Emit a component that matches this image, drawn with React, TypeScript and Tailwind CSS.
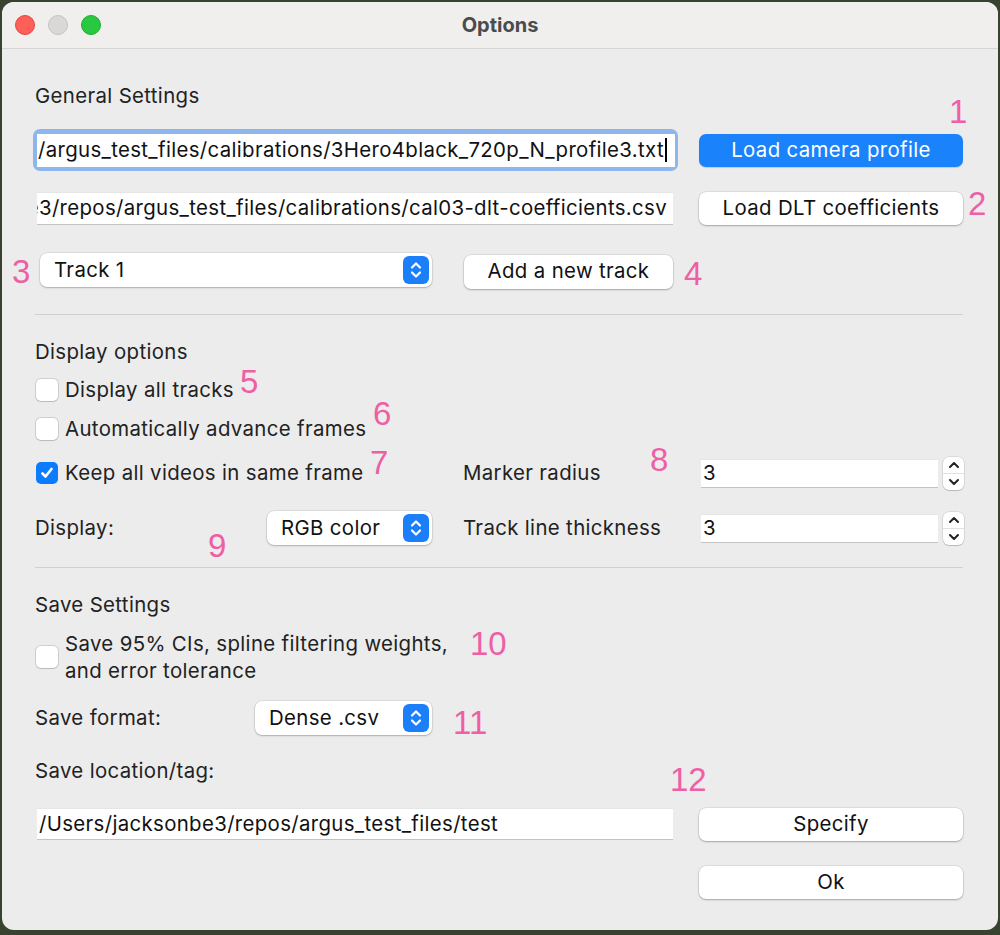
import React from "react";

const font = { fontFamily: "Inter, 'Noto Sans', sans-serif" };

function Pink({ children, x, y }: { children: React.ReactNode; x: number; y: number }) {
  return (
    <div
      className="absolute text-[33px] leading-none text-[#ee5fa5] font-['Liberation_Sans',sans-serif]"
      style={{ left: x, top: y }}
    >
      {children}
    </div>
  );
}

function Btn({ children, w = 264, primary = false, h = 33 }: { children: React.ReactNode; w?: number; primary?: boolean; h?: number }) {
  return (
    <div
      className={
        primary
          ? "flex items-center justify-center rounded-[7px] bg-[#1a82fb] text-white shadow-[0_1px_1px_rgba(0,0,0,0.15)]"
          : "flex items-center justify-center rounded-[7px] bg-white text-[#111] shadow-[0_0_0_0.5px_rgba(0,0,0,0.12),0_1px_2px_rgba(0,0,0,0.25)]"
      }
      style={{ width: w, height: h }}
    >
      {children}
    </div>
  );
}

function Field({ text, w, h = 33, alignEnd = false }: { text: string; w: number; h?: number; alignEnd?: boolean }) {
  return (
    <div
      className={
        "flex items-center overflow-hidden bg-white border-t border-t-[#e6e6e6] border-b border-b-[#c3c3c3] text-[#111] whitespace-nowrap " +
        (alignEnd ? "justify-end pr-[6px]" : "pl-[2px]")
      }
      style={{ width: w, height: h }}
    >
      <span>{text}</span>
    </div>
  );
}

function Stepper() {
  return (
    <div className="flex h-[28px] w-[26px] items-center justify-center rounded-[6px] bg-[#1a7ff8]">
      <svg width="14" height="20" viewBox="0 0 14 20" fill="none" stroke="white" strokeWidth="2.2" strokeLinecap="round" strokeLinejoin="round">
        <path d="M3 7.5 L7 3.5 L11 7.5" />
        <path d="M3 12.5 L7 16.5 L11 12.5" />
      </svg>
    </div>
  );
}

function Combo({ text, w, textPad = 14 }: { text: string; w: number; textPad?: number }) {
  return (
    <div
      className="flex h-[34px] items-center justify-between rounded-[7px] bg-white pr-[3px] text-[#111] shadow-[0_0_0_0.5px_rgba(0,0,0,0.12),0_1px_2px_rgba(0,0,0,0.22)]"
      style={{ width: w, paddingLeft: textPad }}
    >
      <span>{text}</span>
      <Stepper />
    </div>
  );
}

function Check({ checked = false }: { checked?: boolean }) {
  return checked ? (
    <div className="flex h-[22px] w-[22px] shrink-0 items-center justify-center rounded-[5px] bg-[#0b7cfd]">
      <svg width="16" height="16" viewBox="0 0 16 16" fill="none" stroke="white" strokeWidth="2.6" strokeLinecap="round" strokeLinejoin="round">
        <path d="M3.5 8.5 L6.5 11.5 L12.5 4" />
      </svg>
    </div>
  ) : (
    <div className="h-[22px] w-[22px] shrink-0 rounded-[5px] bg-white shadow-[0_0_0_1px_rgba(0,0,0,0.12),0_1px_1px_rgba(0,0,0,0.1)]" />
  );
}

function Spin() {
  return (
    <div className="flex items-center">
      <div className="flex h-[29px] w-[237px] items-center bg-white border-t border-t-[#e6e6e6] border-b border-b-[#c3c3c3] pl-[2px] text-[#111]">
        3
      </div>
      <div className="ml-[5px] flex h-[33px] w-[21px] flex-col rounded-[6px] bg-white shadow-[0_0_0_0.5px_rgba(0,0,0,0.15),0_1px_1px_rgba(0,0,0,0.15)]">
        <div className="flex flex-1 items-center justify-center border-b border-[#e2e2e2]">
          <svg width="12" height="8" viewBox="0 0 12 8" fill="none" stroke="#222" strokeWidth="2" strokeLinecap="round" strokeLinejoin="round">
            <path d="M2 6 L6 2 L10 6" />
          </svg>
        </div>
        <div className="flex flex-1 items-center justify-center">
          <svg width="12" height="8" viewBox="0 0 12 8" fill="none" stroke="#222" strokeWidth="2" strokeLinecap="round" strokeLinejoin="round">
            <path d="M2 2 L6 6 L10 2" />
          </svg>
        </div>
      </div>
    </div>
  );
}

export default function App() {
  return (
    <div className="relative h-[935px] w-[1000px] overflow-hidden bg-[#37422f]" style={font}>
      <div className="relative ml-[2px] mt-[2px] h-[928px] w-[996px] overflow-hidden rounded-[12px] bg-[#ececec] text-[#222]">
        {/* title bar */}
        <div className="relative flex h-[47px] items-center border-b border-[#d6d6d6] bg-[#f0efee]">
          <div className="ml-[13px] flex gap-[13px]">
            <div className="h-[20px] w-[20px] rounded-full bg-[#fe5f57] border border-[#e2463f]" />
            <div className="h-[20px] w-[20px] rounded-full bg-[#d9d8d7] border border-[#c4c3c2]" />
            <div className="h-[20px] w-[20px] rounded-full bg-[#28c840] border border-[#1ead31]" />
          </div>
          <div className="absolute inset-0 flex items-center justify-center text-[20px] font-bold text-[#4b4b4b]">
            Options
          </div>
        </div>

        {/* body */}
        <div className="flex flex-col text-[20.4px] tracking-[0.35px]">
          <div className="ml-[33px] mt-[35px] h-[24px] leading-[24px]">General Settings</div>

          {/* row 1 */}
          <div className="mt-[21px] flex h-[42px] items-center">
            <div className="ml-[31px] flex h-[42px] w-[645px] items-center justify-center rounded-[7px] bg-[#8db6ec]">
              <div className="flex h-[33px] w-[638px] items-center justify-end overflow-hidden bg-white pr-[8px] text-[#111] whitespace-nowrap">
                <span>/Users/jacksonbe3/repos/argus_test_files/calibrations/3Hero4black_720p_N_profile3.txt</span>
                <span className="ml-[1px] h-[24px] w-[1.5px] shrink-0 bg-black" />
              </div>
            </div>
            <div className="ml-[21px]">
              <Btn primary>Load camera profile</Btn>
            </div>
          </div>

          {/* row 2 */}
          <div className="mt-[20px] flex h-[35px] items-center">
            <div className="ml-[35px]">
              <Field text="/Users/jacksonbe3/repos/argus_test_files/calibrations/cal03-dlt-coefficients.csv" w={636} alignEnd />
            </div>
            <div className="ml-[26px]">
              <Btn>Load DLT coefficients</Btn>
            </div>
          </div>

          {/* row 3 */}
          <div className="mt-[26px] flex h-[36px] items-center">
            <div className="ml-[38px]">
              <Combo text="Track 1" w={392} />
            </div>
            <div className="ml-[32px] mt-[3px]">
              <Btn w={209} h={34}>Add a new track</Btn>
            </div>
          </div>

          <div className="ml-[33px] mt-[26px] h-px w-[928px] bg-[#d0d0d0]" />

          <div className="ml-[33px] mt-[25px] h-[24px] leading-[24px]">Display options</div>

          <div className="mt-[14px] flex h-[24px] items-center">
            <div className="ml-[34px]"><Check /></div>
            <span className="ml-[7px]">Display all tracks</span>
          </div>
          <div className="mt-[15px] flex h-[24px] items-center">
            <div className="ml-[34px]"><Check /></div>
            <span className="ml-[7px]">Automatically advance frames</span>
          </div>

          <div className="mt-[15px] flex h-[34px] items-center">
            <div className="ml-[34px]"><Check checked /></div>
            <span className="ml-[7px] w-[390px] whitespace-nowrap">Keep all videos in same frame</span>
            <span className="ml-[8px] w-[238px]">Marker radius</span>
            <Spin />
          </div>

          <div className="mt-[21px] flex h-[34px] items-center">
            <span className="ml-[33px] w-[232px]">Display:</span>
            <Combo text="RGB color" w={165} />
            <span className="ml-[31px] w-[238px] whitespace-nowrap">Track line thickness</span>
            <Spin />
          </div>

          <div className="ml-[33px] mt-[22px] h-px w-[928px] bg-[#d0d0d0]" />

          <div className="ml-[33px] mt-[25px] h-[24px] leading-[24px]">Save Settings</div>

          <div className="mt-[13px] flex items-center">
            <div className="ml-[34px]"><Check /></div>
            <div className="ml-[7px] leading-[27px]">
              Save 95% CIs, spline filtering weights,
              <br />
              and error tolerance
            </div>
          </div>

          <div className="mt-[17px] flex h-[34px] items-center">
            <span className="ml-[33px] w-[220px]">Save format:</span>
            <Combo text="Dense .csv" w={177} />
          </div>

          <div className="ml-[33px] mt-[24px] h-[24px] leading-[24px]">Save location/tag:</div>

          <div className="mt-[24px] flex h-[34px] items-center">
            <div className="ml-[35px]">
              <Field text="/Users/jacksonbe3/repos/argus_test_files/test" w={636} h={32} />
            </div>
            <div className="ml-[26px]">
              <Btn>Specify</Btn>
            </div>
          </div>

          <div className="mt-[24px] flex h-[34px] items-center">
            <div className="ml-[697px]">
              <Btn>Ok</Btn>
            </div>
          </div>
        </div>

        <Pink x={947} y={93}>1</Pink>
        <Pink x={966} y={185}>2</Pink>
        <Pink x={10} y={253}>3</Pink>
        <Pink x={682} y={255}>4</Pink>
        <Pink x={238} y={363}>5</Pink>
        <Pink x={371} y={395}>6</Pink>
        <Pink x={368} y={444}>7</Pink>
        <Pink x={648} y={441}>8</Pink>
        <Pink x={206} y={527}>9</Pink>
        <Pink x={468} y={625}>10</Pink>
        <Pink x={451} y={704}>11</Pink>
        <Pink x={668} y={761}>12</Pink>
      </div>
    </div>
  );
}
